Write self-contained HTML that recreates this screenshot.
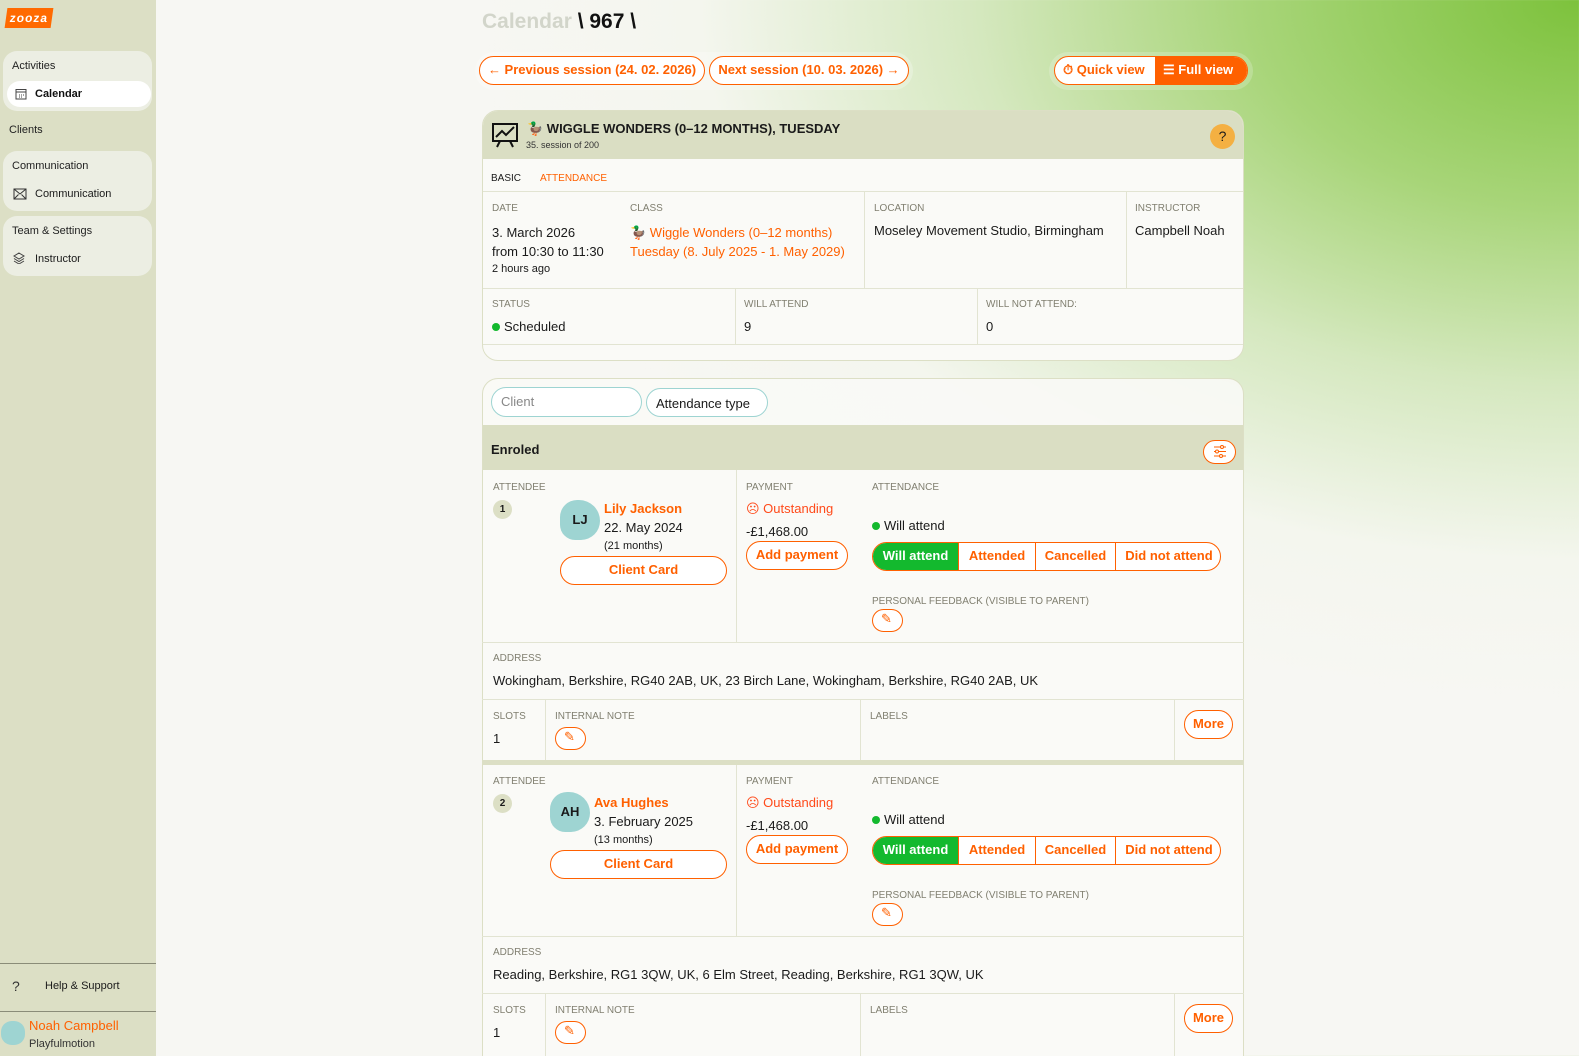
<!DOCTYPE html>
<html><head><meta charset="utf-8"><style>
*{box-sizing:border-box;margin:0;padding:0}
html{width:1579px;height:1056px;overflow:hidden;background:radial-gradient(ellipse 1100px 700px at 1579px 0px,#7dc23c 0%,#a8d579 30%,#d5e8bf 55%,#f4f6ee 80%,#f7f7f3 100%);}
body{width:1579px;height:1056px;overflow:hidden;font-family:"Liberation Sans",sans-serif;color:#1a1a1a;position:relative;background:transparent}
.abs{position:absolute}
.side{left:0;top:0;width:156px;height:1056px;background:#dcdfc5}
.grp{position:absolute;left:3px;width:149px;background:#eceee3;border-radius:14px}
.gl{position:absolute;left:9px;font-size:11px;color:#222}
.item{position:absolute;left:4px;width:144px;height:26px;border-radius:13px;font-size:11px;padding:7px 0 0 28px}
.btn{position:absolute;border:1.5px solid #ff6000;border-radius:16px;color:#ff6000;font-weight:bold;font-size:13px;text-align:center;background:#fff}
.lbl{position:absolute;font-size:10px;color:#807f70;text-transform:uppercase}
.val{position:absolute;font-size:13px;color:#1a1a1a}
.orange{color:#ff6000 !important}
.card{position:absolute;left:482px;width:762px;background:#fafaf7;border:1.5px solid #dcdfc5;border-radius:16px;overflow:hidden}
.hl{position:absolute;background:#e2e4d2}
.vl{position:absolute;width:1px;background:#e2e4d2}
.seg{position:absolute;top:0;height:28px;font-size:13px;font-weight:bold;color:#ff6000;text-align:center;line-height:26px;border-left:1px solid #ff6000}
.pen{position:absolute;width:31px;height:23px;border:1.5px solid #ff6000;border-radius:12px;background:#fff}
.dot{display:inline-block;width:8px;height:8px;border-radius:50%;background:#13b92e;margin-right:4px}
</style></head><body>
<div class="abs side">
  <div class="abs" style="left:6px;top:8px;width:46px;height:20px;background:#ff6a00;transform:skew(-8deg);color:#fff;font-weight:bold;font-size:12px;line-height:20px;text-align:center;letter-spacing:1px">zooza</div>
  <div class="grp" style="top:51px;height:60px"><div class="gl" style="top:9px">Activities</div>
    <div class="item" style="top:30px;background:#fff;font-weight:bold;color:#111">Calendar
    <svg class="abs" style="left:8px;top:7px" width="12" height="12" viewBox="0 0 12 12" fill="none" stroke="#444"><rect x="1" y="1.5" width="10" height="9.5"/><line x1="1" y1="4" x2="11" y2="4"/><path d="M4 7h1M6 7h1M8 7h1M4 9h1M6 9h1"/></svg></div></div>
  <div class="gl" style="top:124px">Clients</div>
  <div class="grp" style="top:151px;height:60px"><div class="gl" style="top:9px">Communication</div>
    <div class="item" style="top:30px">Communication<svg class="abs" style="left:6px;top:7px" width="14" height="12" viewBox="0 0 14 12" fill="none" stroke="#333"><rect x="1" y="1" width="12" height="10"/><path d="M1 1l6 5 6-5M1 11l4.5-4.5M13 11l-4.5-4.5"/></svg></div></div>
  <div class="grp" style="top:216px;height:60px"><div class="gl" style="top:9px">Team &amp; Settings</div>
    <div class="item" style="top:30px">Instructor<svg class="abs" style="left:6px;top:6px" width="12" height="12" viewBox="0 0 12 12" fill="none" stroke="#444"><path d="M6 1l5 3-5 3-5-3z M1 6.5l5 3 5-3 M1 9l5 3 5-3"/></svg></div></div>
  <div class="hl" style="left:0;top:963px;width:156px;height:1px;background:#8a8c78"></div>
  <div class="abs" style="left:12px;top:978px;font-size:14px;color:#333">?</div>
  <div class="abs" style="left:45px;top:980px;font-size:11px">Help &amp; Support</div>
  <div class="hl" style="left:0;top:1011px;width:156px;height:1px;background:#8a8c78"></div>
  <div class="abs" style="left:1px;top:1021px;width:24px;height:24px;border-radius:45%;background:#9ed4d2"></div>
  <div class="abs orange" style="left:29px;top:1018px;font-size:13px">Noah Campbell</div>
  <div class="abs" style="left:29px;top:1038px;font-size:11px;color:#333">Playfulmotion</div>
</div>

<div class="abs" style="left:482px;top:10px;font-size:21px;font-weight:bold;color:#d2d5ca">Calendar <span style="color:#111">\ 967 \</span></div>
<div class="abs" style="left:475px;top:52px;width:438px;height:38px;border-radius:20px;background:rgba(255,255,255,.25)"></div>
<div class="btn" style="left:479px;top:56px;width:226px;height:29px;line-height:26px">&#8592; Previous session (24. 02. 2026)</div>
<div class="btn" style="left:709px;top:56px;width:200px;height:29px;line-height:26px">Next session (10. 03. 2026) &#8594;</div>
<div class="abs" style="left:1049px;top:52px;width:204px;height:38px;border-radius:20px;background:rgba(255,255,255,.2)"></div>
<div class="btn" style="left:1054px;top:56px;width:194px;height:29px;overflow:hidden;text-align:left;line-height:26px">
  <span style="position:absolute;left:8px">&#9201; Quick view</span>
  <span style="position:absolute;left:100px;top:0;width:94px;height:29px;background:#ff6000;color:#fff;padding-left:8px">&#9776; Full view</span></div>

<!-- card 1 -->
<div class="card" style="top:110px;height:251px">
  <div class="abs" style="left:0;top:0;width:762px;height:48px;background:#dadec3"></div>
  <svg class="abs" style="left:8px;top:10px" width="28" height="28" viewBox="0 0 28 28" fill="none" stroke="#111" stroke-width="2"><rect x="2" y="3" width="24" height="17"/><path d="M5 16l6-6 4 4 8-8M9 20l-3 6M19 20l3 6"/></svg>
  <div class="abs" style="left:44px;top:10px;font-size:13px;font-weight:bold">🦆 WIGGLE WONDERS (0–12 MONTHS), TUESDAY</div>
  <div class="abs" style="left:43px;top:29px;font-size:9px;color:#333">35. session of 200</div>
  <div class="abs" style="left:727px;top:13px;width:25px;height:25px;border-radius:50%;background:#f4b042;text-align:center;line-height:25px;font-size:14px">?</div>
  <div class="abs" style="left:8px;top:62px;font-size:10px">BASIC</div>
  <div class="abs orange" style="left:57px;top:62px;font-size:10px">ATTENDANCE</div>
  <div class="hl" style="left:0;top:80px;width:762px;height:1px"></div>
  <div class="abs" style="left:0;top:81px;width:762px;height:152px;background:#fafaf7"></div>
  <div class="lbl" style="left:9px;top:92px">Date</div>
  <div class="val" style="left:9px;top:112px;line-height:19px">3. March 2026<br>from 10:30 to 11:30</div>
  <div class="val" style="left:9px;top:152px;font-size:11px">2 hours ago</div>
  <div class="lbl" style="left:147px;top:92px">Class</div>
  <div class="val orange" style="left:147px;top:112px;line-height:19px">🦆 Wiggle Wonders (0–12 months)<br>Tuesday (8. July 2025 - 1. May 2029)</div>
  <div class="vl" style="left:381px;top:81px;height:96px"></div>
  <div class="lbl" style="left:391px;top:92px">Location</div>
  <div class="val" style="left:391px;top:112px">Moseley Movement Studio, Birmingham</div>
  <div class="vl" style="left:643px;top:81px;height:96px"></div>
  <div class="lbl" style="left:652px;top:92px">Instructor</div>
  <div class="val" style="left:652px;top:112px">Campbell Noah</div>
  <div class="hl" style="left:0;top:177px;width:762px;height:1px"></div>
  <div class="lbl" style="left:9px;top:188px">Status</div>
  <div class="val" style="left:9px;top:208px"><span class="dot"></span>Scheduled</div>
  <div class="vl" style="left:252px;top:177px;height:56px"></div>
  <div class="lbl" style="left:261px;top:188px">Will attend</div>
  <div class="val" style="left:261px;top:208px">9</div>
  <div class="vl" style="left:494px;top:177px;height:56px"></div>
  <div class="lbl" style="left:503px;top:188px">Will not attend:</div>
  <div class="val" style="left:503px;top:208px">0</div>
  <div class="hl" style="left:0;top:233px;width:762px;height:1px"></div>
</div>

<!-- card 2 -->
<div class="card" style="top:378px;height:720px;background:rgba(250,250,246,.9)">
  <div class="abs" style="left:8px;top:8px;width:151px;height:30px;border:1px solid #9ed4d2;border-radius:15px;background:#fff;font-size:13px;color:#888;padding:6px 0 0 9px">Client</div>
  <div class="abs" style="left:163px;top:9px;width:122px;height:29px;border:1px solid #9ed4d2;border-radius:15px;background:#fff;font-size:13px;padding:7px 0 0 9px">Attendance type</div>
  <div class="abs" style="left:0;top:46px;width:762px;height:46px;background:#dadec3"></div>
  <div class="abs" style="left:8px;top:63px;font-size:13px;font-weight:bold">Enroled</div>
  <div class="abs" style="left:720px;top:61px;width:33px;height:24px;border:1.5px solid #ff6000;border-radius:12px;background:#fff"><svg class="abs" style="left:9px;top:4px" width="14" height="13" viewBox="0 0 14 13" stroke="#ff6000" fill="none"><path d="M1 2h12M1 6.5h12M1 11h12"/><circle cx="9" cy="2" r="1.5" fill="#fff"/><circle cx="4" cy="6.5" r="1.5" fill="#fff"/><circle cx="8" cy="11" r="1.5" fill="#fff"/></svg></div>
</div>

<!-- attendee blocks -->
<div class="abs" style="left:482px;top:470px;width:762px;height:294px">
  <div class="abs" style="left:0;top:0;width:762px;height:290px;background:#fafaf7;border-left:1.5px solid #dcdfc5;border-right:1.5px solid #dcdfc5"></div>
  <div class="lbl" style="left:11px;top:12px">Attendee</div>
  <div class="abs" style="left:11px;top:30px;width:19px;height:19px;border-radius:50%;background:#dcdfc5;font-size:10px;font-weight:bold;text-align:center;line-height:19px">1</div>
  <div class="abs" style="left:78px;top:30px;width:40px;height:40px;border-radius:45% 55% 50% 40%;background:#9ed4d2;font-size:13px;font-weight:bold;text-align:center;line-height:40px">LJ</div>
  <div class="val orange" style="left:122px;top:31px;font-weight:bold">Lily Jackson</div>
  <div class="val" style="left:122px;top:50px">22. May 2024</div>
  <div class="val" style="left:122px;top:70px;font-size:11px">(21 months)</div>
  <div class="btn" style="left:78px;top:86px;width:167px;height:29px;line-height:26px">Client Card</div>
  <div class="vl" style="left:254px;top:0;height:172px"></div>
  <div class="lbl" style="left:264px;top:12px">Payment</div>
  <div class="val" style="left:264px;top:31px;color:#ff4a1a">&#9785; Outstanding</div>
  <div class="val" style="left:264px;top:54px">-£1,468.00</div>
  <div class="btn" style="left:264px;top:71px;width:102px;height:29px;line-height:26px">Add payment</div>
  <div class="lbl" style="left:390px;top:12px">Attendance</div>
  <div class="val" style="left:390px;top:48px"><span class="dot"></span>Will attend</div>
  <div class="abs" style="left:390px;top:72px;width:349px;height:29px;border:1.5px solid #ff6000;border-radius:15px;overflow:hidden;background:#fff">
    <div class="seg" style="left:0;width:85px;background:#13b92e;color:#fff;border:none">Will attend</div>
    <div class="seg" style="left:85px;width:77px">Attended</div>
    <div class="seg" style="left:162px;width:80px">Cancelled</div>
    <div class="seg" style="left:242px;width:107px">Did not attend</div></div>
  <div class="lbl" style="left:390px;top:126px">Personal feedback (visible to parent)</div>
  <div class="pen" style="left:390px;top:139px"><span class="abs orange" style="left:8px;top:1px;font-size:13px">&#9998;</span></div>
  <div class="hl" style="left:0;top:172px;width:762px;height:1px"></div>
  <div class="lbl" style="left:11px;top:183px">Address</div>
  <div class="val" style="left:11px;top:203px">Wokingham, Berkshire, RG40 2AB, UK, 23 Birch Lane, Wokingham, Berkshire, RG40 2AB, UK</div>
  <div class="hl" style="left:0;top:229px;width:762px;height:1px"></div>
  <div class="lbl" style="left:11px;top:241px">Slots</div>
  <div class="val" style="left:11px;top:261px">1</div>
  <div class="vl" style="left:63px;top:229px;height:61px"></div>
  <div class="lbl" style="left:73px;top:241px">Internal note</div>
  <div class="pen" style="left:73px;top:257px"><span class="abs orange" style="left:8px;top:1px;font-size:13px">&#9998;</span></div>
  <div class="vl" style="left:378px;top:229px;height:61px"></div>
  <div class="lbl" style="left:388px;top:241px">Labels</div>
  <div class="vl" style="left:692px;top:229px;height:61px"></div>
  <div class="btn" style="left:702px;top:240px;width:49px;height:29px;line-height:26px">More</div>
  <div class="abs" style="left:0;top:290px;width:762px;height:5px;background:#dcdfc5"></div>
</div>

<div class="abs" style="left:482px;top:765px;width:762px;height:294px">
  <div class="abs" style="left:0;top:0;width:762px;height:294px;background:#fafaf7;border-left:1.5px solid #dcdfc5;border-right:1.5px solid #dcdfc5"></div>
  <div class="lbl" style="left:11px;top:11px">Attendee</div>
  <div class="abs" style="left:11px;top:29px;width:19px;height:19px;border-radius:50%;background:#dcdfc5;font-size:10px;font-weight:bold;text-align:center;line-height:19px">2</div>
  <div class="abs" style="left:68px;top:27px;width:40px;height:40px;border-radius:45% 55% 50% 40%;background:#9ed4d2;font-size:13px;font-weight:bold;text-align:center;line-height:40px">AH</div>
  <div class="val orange" style="left:112px;top:30px;font-weight:bold">Ava Hughes</div>
  <div class="val" style="left:112px;top:49px">3. February 2025</div>
  <div class="val" style="left:112px;top:69px;font-size:11px">(13 months)</div>
  <div class="btn" style="left:68px;top:85px;width:177px;height:29px;line-height:26px">Client Card</div>
  <div class="vl" style="left:254px;top:0;height:172px"></div>
  <div class="lbl" style="left:264px;top:11px">Payment</div>
  <div class="val" style="left:264px;top:30px;color:#ff4a1a">&#9785; Outstanding</div>
  <div class="val" style="left:264px;top:53px">-£1,468.00</div>
  <div class="btn" style="left:264px;top:70px;width:102px;height:29px;line-height:26px">Add payment</div>
  <div class="lbl" style="left:390px;top:11px">Attendance</div>
  <div class="val" style="left:390px;top:47px"><span class="dot"></span>Will attend</div>
  <div class="abs" style="left:390px;top:71px;width:349px;height:29px;border:1.5px solid #ff6000;border-radius:15px;overflow:hidden;background:#fff">
    <div class="seg" style="left:0;width:85px;background:#13b92e;color:#fff;border:none">Will attend</div>
    <div class="seg" style="left:85px;width:77px">Attended</div>
    <div class="seg" style="left:162px;width:80px">Cancelled</div>
    <div class="seg" style="left:242px;width:107px">Did not attend</div></div>
  <div class="lbl" style="left:390px;top:125px">Personal feedback (visible to parent)</div>
  <div class="pen" style="left:390px;top:138px"><span class="abs orange" style="left:8px;top:1px;font-size:13px">&#9998;</span></div>
  <div class="hl" style="left:0;top:171px;width:762px;height:1px"></div>
  <div class="lbl" style="left:11px;top:182px">Address</div>
  <div class="val" style="left:11px;top:202px">Reading, Berkshire, RG1 3QW, UK, 6 Elm Street, Reading, Berkshire, RG1 3QW, UK</div>
  <div class="hl" style="left:0;top:228px;width:762px;height:1px"></div>
  <div class="lbl" style="left:11px;top:240px">Slots</div>
  <div class="val" style="left:11px;top:260px">1</div>
  <div class="vl" style="left:63px;top:228px;height:66px"></div>
  <div class="lbl" style="left:73px;top:240px">Internal note</div>
  <div class="pen" style="left:73px;top:256px"><span class="abs orange" style="left:8px;top:1px;font-size:13px">&#9998;</span></div>
  <div class="vl" style="left:378px;top:228px;height:66px"></div>
  <div class="lbl" style="left:388px;top:240px">Labels</div>
  <div class="vl" style="left:692px;top:228px;height:66px"></div>
  <div class="btn" style="left:702px;top:239px;width:49px;height:29px;line-height:26px">More</div>
</div>
</body></html>
